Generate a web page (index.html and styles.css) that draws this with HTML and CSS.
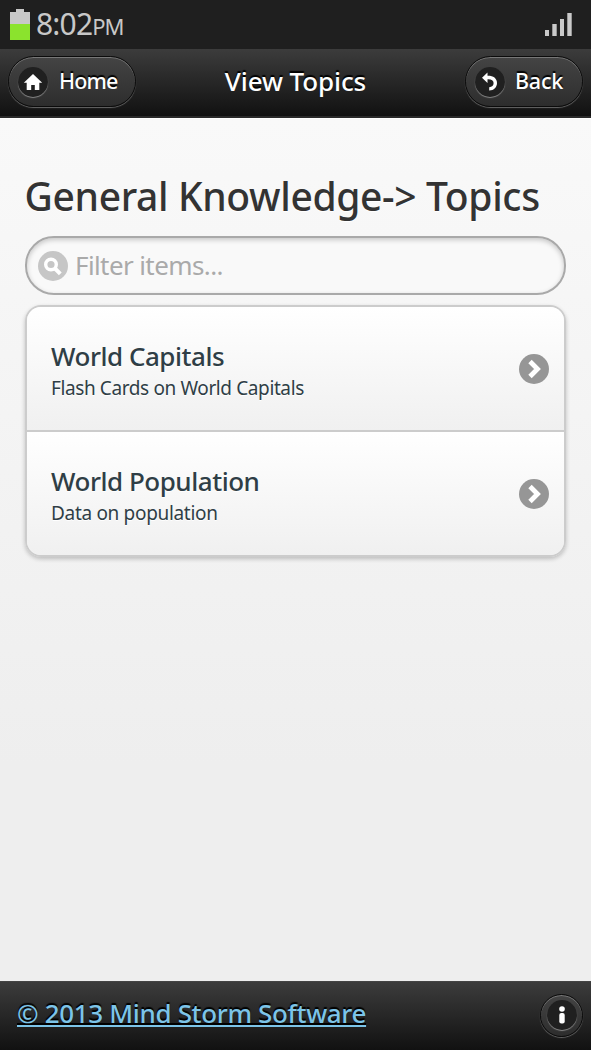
FILE: index.html
```html
<!DOCTYPE html>
<html lang="en">
<head>
<meta charset="utf-8">
<title>View Topics</title>
<link rel="stylesheet" href="styles.css">
</head>
<body>
<div class="status">
  <svg class="battery" width="20" height="31" viewBox="0 0 20 31"><path d="M0 3h6V0h8v3h6v28H0z" fill="#c8c8c8"/><path d="M0 15h20v16H0z" fill="#8be32d"/></svg>
  <span class="clock">8:02</span><span class="ampm">PM</span>
  <svg class="signal" width="27" height="24" viewBox="0 0 27 24" fill="#c9c9c9"><path d="M0 17h4v6H0zM7.300 11h4.400v12H7.300zM15 6h4v17h-4zM22.300 0h4.400v23h-4.400z"/></svg>
</div>
<header class="bar header">
  <a class="btn home"><span class="disc"><svg width="20" height="18" viewBox="0 0 20 18"><path d="M10 1L.8 9.800h2.900V17h4.500v-5h3.600v5h4.500V9.800h2.900z" fill="#fff"/></svg></span><span class="label">Home</span></a>
  <h1 class="title"><span>View Topics</span></h1>
  <a class="btn back"><span class="disc"><svg width="18" height="20" viewBox="0 0 18 20"><path d="M6.500.5v3.300C12 3.600 16 6.200 16 11c0 4-3 7.500-7.800 7.500v-3.200c2.800 0 4.400-1.900 4.400-4.200 0-2.500-2.200-4-6.100-3.800v3.600L1 5.700z" fill="#fff"/></svg></span><span class="label">Back</span></a>
</header>
<main class="content">
  <h2 class="heading"><span>General Knowledge-&gt; Topics</span></h2>
  <div class="search">
    <svg width="30" height="30" viewBox="0 0 30 30"><circle cx="15" cy="15" r="15" fill="#c6c6c6"/><circle cx="13" cy="13.500" r="5.300" fill="none" stroke="#fff" stroke-width="3.400"/><path d="M17 17.500l5.300 5.300" stroke="#fff" stroke-width="4"/></svg>
    <span>Filter items...</span>
  </div>
  <ul class="list">
    <li class="item">
      <div><h3>World Capitals</h3><p class="long">Flash Cards on World Capitals</p></div>
      <svg class="chev" width="30" height="30" viewBox="0 0 30 30"><circle cx="15" cy="15" r="15" fill="#969696"/><path d="M11 7.500l7.500 7.500-7.500 7.500" fill="none" stroke="#fff" stroke-width="4.800"/></svg>
    </li>
    <li class="item">
      <div><h3>World Population</h3><p>Data on population</p></div>
      <svg class="chev" width="30" height="30" viewBox="0 0 30 30"><circle cx="15" cy="15" r="15" fill="#969696"/><path d="M11 7.500l7.500 7.500-7.500 7.500" fill="none" stroke="#fff" stroke-width="4.800"/></svg>
    </li>
  </ul>
</main>
<footer class="bar footer">
  <a class="copy">© 2013 Mind Storm Software</a>
  <a class="btn info"><span class="disc"><svg width="6" height="18" viewBox="0 0 6 18" fill="#fff"><circle cx="3" cy="3" r="2.800"/><rect x=".3" y="7" width="5.400" height="10.500" rx="2"/></svg></span></a>
</footer>
</body>
</html>
```
FILE: styles.css
```css
* { box-sizing: border-box; }
body {
  margin: 0;
  width: 591px;
  height: 1050px;
  overflow: hidden;
  display: flex;
  flex-direction: column;
  font-family: "Noto Sans", "Open Sans", sans-serif;
  font-weight: 500;
  background: #eee;
}
h1, h2, h3, p, ul { margin: 0; padding: 0; font-weight: 500; }
span, a { white-space: nowrap; }

.status {
  height: 49px;
  flex: none;
  display: flex;
  align-items: flex-start;
  padding: 9px 19px 0 10px;
  background: #1f1f1f;
  color: #c8c8c8;
  font-weight: 400;
}
.clock { margin-left: 6px; font-size: 30px; line-height: 30px; letter-spacing: -0.8px; }
.ampm { font-size: 22px; line-height: 34px; letter-spacing: -1.2px; }
.signal { margin: 4px 0 0 auto; }

.bar {
  flex: none;
  background: linear-gradient(#3c3c3c, #111);
  color: #fff;
  text-shadow: 0 -2px 1px #000;
}
.header {
  display: grid;
  grid-template-columns: 1fr auto 1fr;
  align-items: center;
  height: 69px;
  padding: 0 8px 3px;
  border-bottom: 2px solid #2a2a2a;
}
.btn {
  display: flex;
  align-items: center;
  height: 51px;
  border: 1px solid #0b0b0b;
  border-radius: 26px;
  padding-left: 9px;
  background: linear-gradient(#444, #2d2d2d);
  box-shadow: inset 0 1px 0 #777, 0 1px 1px #666;
}
.header .btn { padding-top: 1px; }
.home { width: 128px; }
.back { width: 118px; justify-self: end; }
.disc {
  display: flex;
  align-items: center;
  justify-content: center;
  width: 30px;
  height: 30px;
  border-radius: 50%;
  background: #202020;
  box-shadow: 0 1px 1px #888;
}
.label { margin-left: 11px; font-size: 21.5px; line-height: 30px; letter-spacing: -0.9px; padding-bottom: 2px; }
.back .label { margin-left: 10px; letter-spacing: -0.2px; }
.title { font-size: 26px; line-height: 34px; letter-spacing: -0.1px; }

.content {
  flex: 1;
  padding: 54px 25px 0;
  background: linear-gradient(#f9f9f9, #eee 75%);
  border-top: 1px solid #fff;
}
.heading {
  height: 63px;
  font-size: 39px;
  line-height: 46px;
  letter-spacing: -0.35px;
  color: #333;
  text-indent: -0.5px;
  text-shadow: 0 1px 0 #fff;
}
.search {
  height: 59px;
  display: flex;
  align-items: center;
  padding-left: 11px;
  border: 2px solid #a9a9a9;
  border-radius: 29px;
  background: #f9f9f9;
  box-shadow: inset 0 2px 5px rgba(0,0,0,.2);
  color: #aaa;
  font-weight: 400;
  font-size: 26px;
  letter-spacing: -0.6px;
}
.search span { margin-left: 7px; line-height: 34px; padding-bottom: 2px; }
.list {
  margin-top: 10px;
  list-style: none;
  border: 2px solid #ccc;
  border-radius: 16px;
  overflow: hidden;
  box-shadow: 0 2px 4px rgba(0,0,0,.22);
}
.item {
  height: 123px;
  display: flex;
  justify-content: space-between;
  align-items: center;
  padding: 0 15px 0 24px;
  background: linear-gradient(#fff, #f0f0f0);
  color: #2f3e46;
  text-shadow: 0 1px 0 #fff;
}
.item + .item { height: 125px; border-top: 2px solid #ccc; }
.item h3 { font-size: 26px; line-height: 33px; letter-spacing: -0.47px; }
.item p { font-size: 19px; line-height: 31px; font-weight: 400; letter-spacing: -0.32px; }
.item .long { letter-spacing: -0.39px; }
.item div { padding-top: 7px; }

.footer {
  display: flex;
  align-items: center;
  justify-content: space-between;
  height: 69px;
  padding: 0 8px 2px 17px;
  border-top: 1px solid #444;
}
.copy {
  font-size: 26px;
  line-height: 34px;
  letter-spacing: -0.34px;
  padding-bottom: 5px;
  color: #7cc4e8;
  text-decoration: underline;
  text-decoration-thickness: 2px;
  text-underline-offset: 2px;
  text-decoration-skip-ink: none;
}
.info { width: 43px; height: 43px; padding-left: 6px; }
```
